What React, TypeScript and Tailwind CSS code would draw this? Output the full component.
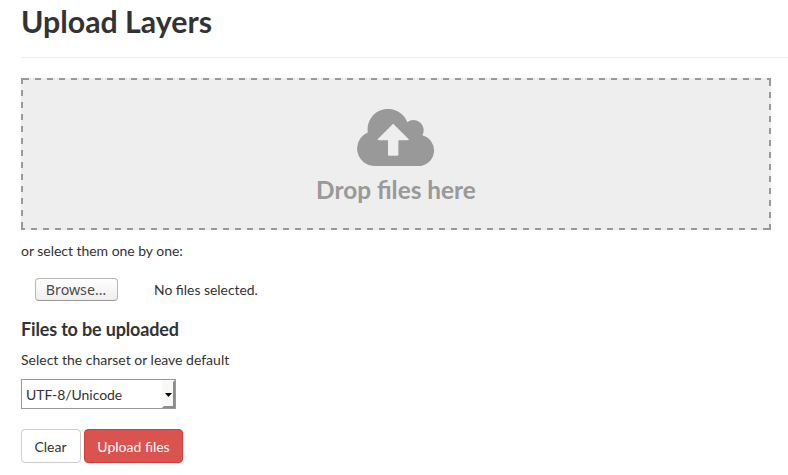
const label = "text-[14px] leading-[20px]";

function CloudUpload() {
  return (
    <svg width="78" height="57" viewBox="0 0 78 57" className="block shrink-0" aria-hidden="true">
      <path
        fill="#999999"
        fillRule="evenodd"
        d="M18.3 57A17.5 17.5 0 0 1 10.8 23.4A20.5 20.5 0 0 1 50.3 13.3A10.1 10.1 0 0 1 65.3 26.3A15.6 15.6 0 0 1 62.2 57ZM36.2 14.7L20.4 30.5Q21 31.2 22 31.2H31V45.6Q31 46.8 32.2 46.8H40.2Q41.4 46.8 41.4 45.6V31.2H50.4Q51.4 31.2 52 30.5Z"
      />
    </svg>
  );
}

// Evenly spaced 6px dashes along all four edges of the drop area.
const dashes =
  "bg-[repeating-linear-gradient(90deg,#999_0_6px,transparent_6px_12px),repeating-linear-gradient(90deg,#999_0_6px,transparent_6px_12px),repeating-linear-gradient(180deg,#999_0_6px,transparent_6px_12px),repeating-linear-gradient(180deg,#999_0_6px,transparent_6px_12px)] [background-size:748px_2px,752px_2px,2px_152px,2px_150px] [background-position:2px_0,-2px_150px,0_0,748px_2px] bg-no-repeat";

export default function App() {
  return (
    <main className="flex h-[475px] flex-col items-start overflow-hidden bg-white pl-[21px] font-['Lato',sans-serif] text-[#333333]">
      <h1 className="mt-[5px] text-[30.3px] font-bold leading-[33px]">Upload Layers</h1>
      <hr className="mt-[19px] w-full border-0 border-t border-[#eeeeee]" />
      <section className={`mt-[20px] flex h-[152px] w-[750px] flex-col items-center bg-[#eeeeee] pt-[31px] ${dashes}`}>
        <CloudUpload />
        <p className="mt-[10px] text-[24.4px] font-bold leading-[28px] text-[#999999]">Drop files here</p>
      </section>
      <p className={`${label} mt-[11px] tracking-[-0.03px]`}>or select them one by one:</p>
      <div className="mt-[17px] flex h-[23px] items-center pl-[14px]">
        <button className="h-[23px] w-[83px] rounded-[4px] border border-[#b9b6b3] border-b-[#9c9a98] bg-linear-to-b from-white to-[#efeeed] pr-[1px] font-['Noto_Sans',sans-serif] text-[14.2px] leading-[20px] text-[#4c4c4c]">
          Browse…
        </button>
        <span className="ml-[36px] text-[13.9px] leading-[20px]">No files selected.</span>
      </div>
      <h2 className="mt-[18px] text-[18px] font-bold leading-[20px] tracking-[-0.16px]">Files to be uploaded</h2>
      <p className={`${label} mt-[11px]`}>Select the charset or leave default</p>
      <div className="mt-[9px] flex h-[30px] w-[155px] justify-between border border-[#999999] bg-white pl-[4px]">
        <span className="text-[14px] leading-[30px] tracking-[-0.06px]">UTF-8/Unicode</span>
        <span className="flex w-[13px] items-center justify-center border-2 border-b-[#8c8c8c] border-l-transparent border-r-[#8c8c8c] border-t-transparent bg-[#f8f8f7] pt-px">
          <svg width="7" height="4" viewBox="0 0 7 4" className="shrink-0" aria-hidden="true">
            <path d="M0 0H7L3.5 4Z" fill="#000000" />
          </svg>
        </span>
      </div>
      <div className="mt-[20px] flex gap-[3px]">
        <button className="h-[34px] w-[60px] rounded-[4px] border border-[#cccccc] bg-white pr-[1px] text-[14px]">Clear</button>
        <button className="h-[34px] w-[99px] rounded-[4px] border border-[#d43f3a] bg-[#d9534f] text-[14px] text-white">
          Upload files
        </button>
      </div>
    </main>
  );
}
